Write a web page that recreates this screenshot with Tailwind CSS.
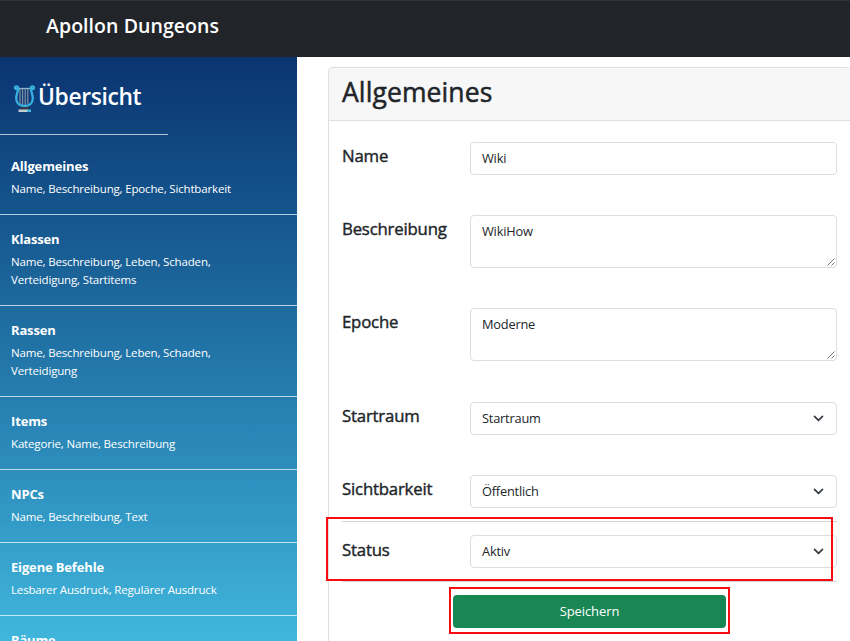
<!DOCTYPE html>
<html lang="de">
<head>
<meta charset="utf-8">
<title>Apollon Dungeons</title>
<script src="https://cdn.jsdelivr.net/npm/@tailwindcss/browser@4"></script>
</head>
<body class="relative h-[641px] w-[850px] overflow-hidden bg-white font-['Open_Sans','Noto_Sans',sans-serif] text-[#212529]">
<header class="flex h-[57px] items-start border-t border-[#2c3338] bg-[#212529] pt-[10px] pl-[46px]">
  <span class="text-[19.5px] leading-[30px] font-semibold tracking-[0.06px] whitespace-nowrap text-white">Apollon Dungeons</span>
</header>
<div class="flex h-[584px]">
  <aside class="h-full w-[297px] shrink-0 overflow-hidden bg-linear-to-b from-[#0b3471] to-[#40b6dd] text-white">
    <div class="flex h-[77px] items-center pl-[13px]">
      <svg class="mt-[5px] h-[29px] w-[23px]" viewBox="0 0 23 29" fill="none">
        <path d="M7 5V20M9.600 5V21M12.200 5V21M14.800 5V20" stroke="#8c96a5" stroke-width="1.100"/>
        <path d="M4.500 4.500H18.500" stroke="#8cb4c8" stroke-width="1.300"/>
        <path d="M3.600 5C2 5.400 1.300 3.200 2.700 2.500C4.300 1.800 5.700 3.300 5.200 5.200C4.800 8 3.200 10.500 3.200 14.500C3.300 19.500 6.800 22 11.500 22S19.700 19.500 19.800 14.500C19.800 10.500 18.200 8 17.800 5.200C17.300 3.300 18.700 1.800 20.300 2.500C21.700 3.200 21 5.400 19.400 5" stroke="#38b0df" stroke-width="2.300" stroke-linecap="round"/>
        <path d="M8 23H16V25.500H7Z" fill="#343b43"/>
        <path d="M5.500 25.500H15V28H5.500Z" fill="#c9ced2"/><path d="M14 25.500H18V28H14Z" fill="#43b7e3"/>
      </svg>
      <h1 class="mt-[2px] ml-[2px] text-[22.8px] leading-[30px] font-semibold tracking-[-0.35px]">Übersicht</h1>
    </div>
    <div class="mb-[7px] h-px w-[168px] bg-[#b4c1d3]"></div>
    <nav class="text-[11.5px] leading-[18px] tracking-[-0.16px]">
      <div class="h-[73px] border-b border-white/70 px-[11px] pt-[14px]"><h2 class="mb-1 text-[13px] leading-5 font-bold">Allgemeines</h2><p>Name, Beschreibung, Epoche, Sichtbarkeit</p></div>
      <div class="h-[91px] border-b border-white/70 px-[11px] pt-[14px]"><h2 class="mb-1 text-[13px] leading-5 font-bold">Klassen</h2><p>Name, Beschreibung, Leben, Schaden,<br>Verteidigung, Startitems</p></div>
      <div class="h-[91px] border-b border-white/70 px-[11px] pt-[14px]"><h2 class="mb-1 text-[13px] leading-5 font-bold">Rassen</h2><p>Name, Beschreibung, Leben, Schaden,<br>Verteidigung</p></div>
      <div class="h-[73px] border-b border-white/70 px-[11px] pt-[14px]"><h2 class="mb-1 text-[13px] leading-5 font-bold">Items</h2><p>Kategorie, Name, Beschreibung</p></div>
      <div class="h-[73px] border-b border-white/70 px-[11px] pt-[14px]"><h2 class="mb-1 text-[13px] leading-5 font-bold">NPCs</h2><p>Name, Beschreibung, Text</p></div>
      <div class="h-[73px] border-b border-white/70 px-[11px] pt-[14px]"><h2 class="mb-1 text-[13px] leading-5 font-bold">Eigene Befehle</h2><p>Lesbarer Ausdruck, Regulärer Ausdruck</p></div>
      <div class="h-[73px] px-[11px] pt-[14px]"><h2 class="mb-1 text-[13px] leading-5 font-bold">Räume</h2></div>
    </nav>
  </aside>
  <main class="w-[553px] pt-[10px] pl-[31px]">
    <section class="h-[578px] w-[523px] overflow-hidden rounded-[4px] border border-[#dfdfdf] bg-white">
      <div class="h-[53px] border-b border-[#dfdfdf] bg-[#f7f7f7] pt-[7px] pl-[13px]">
        <h2 class="text-[26.5px] leading-[34px] tracking-[0.1px] [-webkit-text-stroke:0.5px]">Allgemeines</h2>
      </div>
      <form class="pt-[21px] pr-[13px] pl-[13px] text-[12.8px] tracking-[-0.2px]">
        <div class="mb-[40px] flex"><label class="-mt-px w-[128px] text-[16.8px] leading-[30px] [-webkit-text-stroke:0.4px]">Name</label><div class="h-[33px] flex-1 rounded-[4px] border border-[#d8dee3] px-[11px] leading-[31px]">Wiki</div></div>
        <div class="mb-[40px] flex"><label class="-mt-px w-[128px] text-[16.8px] leading-[30px] [-webkit-text-stroke:0.4px]">Beschreibung</label><div class="flex h-[53px] flex-1 items-end justify-between rounded-[4px] border border-[#d8dee3] pl-[11px]"><span class="self-start leading-[31px]">WikiHow</span><svg class="mr-px mb-px h-2 w-2" viewBox="0 0 8 8" stroke="#777" stroke-width="1"><path d="M0.500 7.500L7.500 0.500M4.500 7.500L7.500 4.500"/></svg></div></div>
        <div class="mb-[41px] flex"><label class="-mt-px w-[128px] text-[16.8px] leading-[30px] [-webkit-text-stroke:0.4px]">Epoche</label><div class="flex h-[53px] flex-1 items-end justify-between rounded-[4px] border border-[#d8dee3] pl-[11px]"><span class="self-start leading-[31px]">Moderne</span><svg class="mr-px mb-px h-2 w-2" viewBox="0 0 8 8" stroke="#777" stroke-width="1"><path d="M0.500 7.500L7.500 0.500M4.500 7.500L7.500 4.500"/></svg></div></div>
        <div class="mb-[40px] flex"><label class="-mt-px w-[128px] text-[16.8px] leading-[30px] [-webkit-text-stroke:0.4px]">Startraum</label><div class="flex h-[33px] flex-1 items-center justify-between rounded-[4px] border border-[#d8dee3] pr-[12px] pl-[11px]"><span>Startraum</span><svg class="h-[7px] w-[11px]" viewBox="0 0 11 7" fill="none" stroke="#343a40" stroke-width="1.700" stroke-linecap="round" stroke-linejoin="round"><path d="M1.500 1.300L5.500 5.300L9.500 1.300"/></svg></div></div>
        <div class="mb-[13px] flex"><label class="-mt-px w-[128px] text-[16.8px] leading-[30px] [-webkit-text-stroke:0.4px]">Sichtbarkeit</label><div class="flex h-[33px] flex-1 items-center justify-between rounded-[4px] border border-[#d8dee3] pr-[12px] pl-[11px]"><span>Öffentlich</span><svg class="h-[7px] w-[11px]" viewBox="0 0 11 7" fill="none" stroke="#343a40" stroke-width="1.700" stroke-linecap="round" stroke-linejoin="round"><path d="M1.500 1.300L5.500 5.300L9.500 1.300"/></svg></div></div>
        <div class="mb-[13px] h-px bg-[#d3d4d4]"></div>
        <div class="mb-[13px] flex"><label class="w-[128px] text-[16.8px] leading-[30px] [-webkit-text-stroke:0.4px]">Status</label><div class="flex h-[33px] flex-1 items-center justify-between rounded-[4px] border border-[#d8dee3] pr-[12px] pl-[11px]"><span>Aktiv</span><svg class="h-[7px] w-[11px]" viewBox="0 0 11 7" fill="none" stroke="#343a40" stroke-width="1.700" stroke-linecap="round" stroke-linejoin="round"><path d="M1.500 1.300L5.500 5.300L9.500 1.300"/></svg></div></div>
        <div class="mb-[13px] h-px bg-[#d3d4d4]"></div>
        <button type="button" class="mx-auto block h-[33px] w-[273px] rounded-[4px] bg-[#198754] text-[13px] tracking-[-0.1px] text-white">Speichern</button>
      </form>
    </section>
  </main>
</div>
<div class="absolute top-[517px] left-[326px] h-[64px] w-[507px] border-2 border-[#f60d12]"></div>
<div class="absolute top-[587px] left-[449px] h-[47px] w-[281px] border-2 border-[#f60d12]"></div>
</body>
</html>
